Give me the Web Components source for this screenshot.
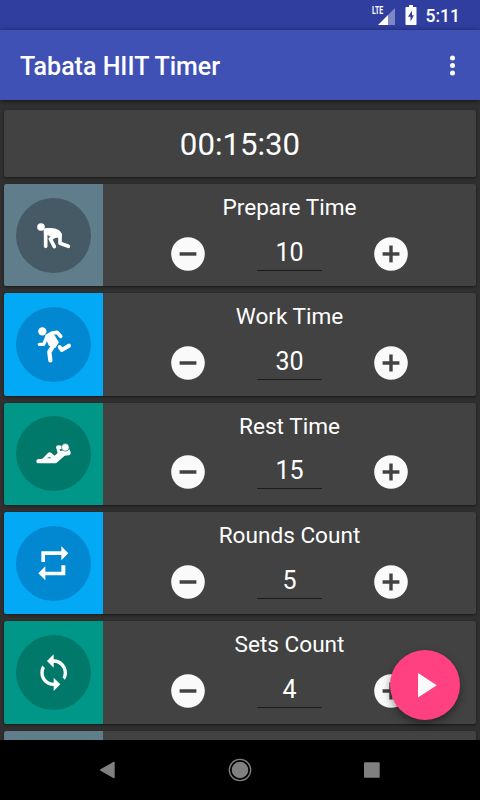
<!DOCTYPE html>
<html lang="en">
<head>
<meta charset="utf-8">
<title>Tabata HIIT Timer</title>
<style>
html, body {
    margin: 0;
    height: 100%;
    overflow: hidden;
    background: #303030;
    font-family: Roboto, "Liberation Sans", sans-serif;
    color: #fff;
}
</style>
</head>
<body>

<timer-app>
    <status-bar slot="top" time="5:11"></status-bar>
    <app-bar slot="top">Tabata HIIT Timer</app-bar>
    <total-card>00:15:30</total-card>
    <setting-card label="Prepare Time" value="10" icon="prepare" color="grey"></setting-card>
    <setting-card label="Work Time" value="30" icon="work" color="blue"></setting-card>
    <setting-card label="Rest Time" value="15" icon="rest" color="teal"></setting-card>
    <setting-card label="Rounds Count" value="5" icon="rounds" color="blue"></setting-card>
    <setting-card label="Sets Count" value="4" icon="sets" color="teal"></setting-card>
    <setting-card color="grey"></setting-card>
    <play-button slot="fab"></play-button>
    <nav-bar slot="bottom"></nav-bar>
</timer-app>

<script>
const define = (name, html, setup) => {
    const template = document.createElement('template');
    template.innerHTML = html;

    window.customElements.define(name, class extends HTMLElement {
        constructor() {
            super();
            const shadow = this.attachShadow({ mode: 'open' });
            shadow.append(template.content.cloneNode(true));
        }

        connectedCallback() {
            if (setup) setup(this, this.shadowRoot);
        }
    });
};

define('timer-app', `
<style>
:host {
    display: flex;
    flex-direction: column;
    width: 480px;
    height: 800px;
    position: relative;
    overflow: hidden;
}

main {
    flex: 1;
    min-height: 0;
    overflow: hidden;
    display: flex;
    flex-direction: column;
    gap: 7.2px;
    padding: 9.8px 3.8px 0;
    box-sizing: border-box;
    background: #303030;
}
</style>
<slot name="top"></slot>
<main><slot></slot></main>
<slot name="fab"></slot>
<slot name="bottom"></slot>
`);

define('status-bar', `
<style>
:host {
    display: flex;
    align-items: center;
    justify-content: flex-end;
    height: 30px;
    flex: none;
    background: #303f9f;
    padding-right: 20px;
    box-sizing: border-box;
}

.signal {
    display: flex;
    align-items: flex-start;
}

.lte {
    font-size: 10.5px;
    font-weight: 700;
    line-height: 10px;
    width: 12px;
    margin: 0 -6.5px 0 0;
    transform: scaleX(.66);
    transform-origin: 0 0;
}

.time {
    font-size: 17.5px;
    font-weight: 500;
    line-height: 30px;
    margin-left: 9px;
    padding-top: 2px;
}
</style>
<div class="signal">
    <span class="lte">LTE</span>
    <svg width="17" height="19" viewBox="0 0 17 19">
        <path d="M17 2v17H10V9z" fill="#7c87c4"/>
        <path d="M0 19L10 9v10z" fill="#fff"/>
    </svg>
</div>
<svg style="margin-left:10px" width="12" height="20" viewBox="0 0 12 20">
    <path d="M4 0h4v2h2.700q.8 0 .8.800V19.200q0 .8-.8.800H1.300q-.8 0-.8-.800V2.800Q.5 2 1.300 2H4z" fill="#fff"/>
    <path d="M7 5.500v4.700h2L5.500 16.500v-4.700H3z" fill="#303f9f"/>
</svg>
<span class="time"></span>
`, (host, root) => {
    root.querySelector('.time').textContent = host.getAttribute('time');
});

define('app-bar', `
<style>
:host {
    display: flex;
    align-items: center;
    justify-content: space-between;
    height: 70px;
    flex: none;
    box-sizing: border-box;
    padding: 0 25px 0 20px;
    background: #3f51b5;
    box-shadow: 0 1px 5px rgba(0, 0, 0, .6);
    font-size: 25px;
    font-weight: 500;
    z-index: 1;
}

span {
    padding-top: 3px;
}
</style>
<span><slot></slot></span>
<svg width="5" height="21" viewBox="0 0 5 21" fill="#fff">
    <circle cx="2.500" cy="3" r="2.500"/>
    <circle cx="2.500" cy="10.500" r="2.500"/>
    <circle cx="2.500" cy="18" r="2.500"/>
</svg>
`);

define('total-card', `
<style>
:host {
    display: flex;
    align-items: center;
    justify-content: center;
    flex: none;
    height: 67px;
    padding-top: 3px;
    box-sizing: border-box;
    border-radius: 2.500px;
    background: #424242;
    box-shadow: 0 1px 3px rgba(0, 0, 0, .5);
    font-size: 31.2px;
}
</style>
<slot></slot>
`);

// each icon is drawn inside the 225 unit square of its round badge
const icons = {
    prepare: `<svg viewBox="47 51 225 225" fill="none" stroke="#fff" stroke-linecap="round" stroke-linejoin="round">
        <circle cx="122" cy="138" r="11.500" fill="#fff" stroke="none"/>
        <path d="M130.500 149Q131 141 139 141H152Q179 143 184 158V170L165 170L150 167L142 162H131Z" fill="#fff" stroke="none"/>
        <path d="M136 148V196" stroke-width="11"/>
        <path d="M165 164L150 174L162 197" stroke-width="11"/>
        <path d="M179 160V187L204 196" stroke-width="11"/>
    </svg>`,
    work: `<svg viewBox="47 50 225 225" fill="none" stroke="#fff" stroke-linecap="round" stroke-linejoin="round">
        <circle cx="126" cy="123" r="12.500" fill="#fff" stroke="none"/>
        <path d="M117 162L130 162L138 143" stroke-width="10"/>
        <path d="M140 137L155 128L170 126L181 138" stroke-width="11"/>
        <path d="M137 139L157 130L173 156L163 171L147 164Z" fill="#fff" stroke-width="5"/>
        <path d="M158 167L147 185L150 210" stroke-width="13"/>
        <path d="M178 170L184 179L206 166" stroke-width="12"/>
    </svg>`,
    rest: `<svg viewBox="47 48 225 225" fill="#fff">
        <path fill-rule="evenodd" d="M112 178L126 176L143 159Q148 155 153 159L163 167L172 159L167 142Q168 136 174 136L188 138L205 143L211 157Q212 165 205 166L193 167L169 188Q167 190 162 190H112Q108 188 108 183Q109 179 112 178ZM139 175H154L147 171ZM177 148L180 153L189 151L186 147Z"/>
        <circle cx="195" cy="142" r="11.500" stroke="#00796b" stroke-width="2"/>
    </svg>`,
    rounds: `<svg viewBox="47 47 225 225" fill="#fff">
        <path d="M123 155V123H183V108L204 129L183 150V134H134V155ZM195 165V195H135V210L114 189L135 168V184H183V165Z"/>
    </svg>`,
    sets: `<svg viewBox="47 44 225 225" fill="#fff">
        <path transform="translate(100 97) scale(5)" d="M12 4V1L8 5l4 4V6c3.310 0 6 2.690 6 6 0 1.010-.25 1.970-.7 2.800l1.460 1.460C19.540 15.030 20 13.570 20 12c0-4.420-3.580-8-8-8zm0 14c-3.310 0-6-2.690-6-6 0-1.010.25-1.970.7-2.800L5.240 7.740C4.460 8.970 4 10.430 4 12c0 4.420 3.580 8 8 8v3l4-4-4-4v3z"/>
    </svg>`
};

const colors = {
    grey: ['#607d8b', '#455a64'],
    blue: ['#03a9f4', '#0288d1'],
    teal: ['#009688', '#00796b']
};

define('round-button', `
<style>
:host {
    display: block;
    width: 34px;
    height: 34px;
}

svg {
    display: block;
}
</style>
<svg width="34" height="34" viewBox="0 0 34 34">
    <circle cx="17" cy="17" r="16.800" fill="#fafafa"/>
    <path d="M8.600 17h16.800" stroke="#424242" stroke-width="3.400"/>
    <path class="bar" d="M17 8.600v16.800" stroke="#424242" stroke-width="3.400"/>
</svg>
`, (host, root) => {
    if (host.getAttribute('type') === 'minus') {
        root.querySelector('.bar').remove();
    }
});

define('setting-card', `
<style>
:host {
    display: flex;
    flex: none;
    height: 102.200px;
    border-radius: 2.500px;
    overflow: hidden;
    background: #424242;
    box-shadow: 0 1px 3px rgba(0, 0, 0, .5);
}

.side {
    width: 99px;
    display: flex;
    align-items: center;
    justify-content: center;
    background: var(--side);
}

.badge {
    width: 75px;
    height: 75px;
    border-radius: 50%;
    background: var(--badge);
}

.badge svg {
    display: block;
    width: 75px;
    height: 75px;
}

.body {
    flex: 1;
    display: flex;
    flex-direction: column;
    align-items: center;
}

.label {
    font-size: 22.600px;
    line-height: 26px;
    margin-top: 11px;
}

.row {
    display: flex;
    align-items: center;
    justify-content: center;
    width: 100%;
    height: 34px;
    margin-top: 15.700px;
}

.value {
    box-sizing: border-box;
    width: 65px;
    height: 34px;
    margin: 0 51.700px;
    text-align: center;
    font-size: 25px;
    line-height: 31px;
    border-bottom: 1px solid #1c1c1c;
}
</style>
<div class="side"><div class="badge"></div></div>
<div class="body">
    <div class="label"></div>
    <div class="row">
        <round-button type="minus"></round-button>
        <div class="value"></div>
        <round-button type="plus"></round-button>
    </div>
</div>
`, (host, root) => {
    const [side, badge] = colors[host.getAttribute('color')];
    host.style.setProperty('--side', side);
    host.style.setProperty('--badge', badge);
    root.querySelector('.badge').innerHTML = icons[host.getAttribute('icon')] || '';
    root.querySelector('.label').textContent = host.getAttribute('label');
    root.querySelector('.value').textContent = host.getAttribute('value');
});

define('play-button', `
<style>
:host {
    display: block;
    position: absolute;
    right: 20px;
    bottom: 80px;
    width: 70px;
    height: 70px;
    border-radius: 50%;
    background: #ff4081;
    box-shadow: 0 4px 8px rgba(0, 0, 0, .4);
}

svg {
    display: block;
}
</style>
<svg width="70" height="70" viewBox="0 0 70 70">
    <path d="M28 23v24.500L46.800 35.200z" fill="#fafafa"/>
</svg>
`);

define('nav-bar', `
<style>
:host {
    display: flex;
    align-items: center;
    justify-content: space-between;
    flex: none;
    height: 60px;
    box-sizing: border-box;
    padding: 0 96px;
    background: #000;
    z-index: 1;
}
</style>
<svg width="24" height="24" viewBox="0 0 24 24" fill="#808080">
    <path d="M4.500 11.300L17.700 3.800Q18.700 3.500 18.700 4.500V19.500Q18.700 20.500 17.700 20.200L4.500 12.700Q3.500 12 4.500 11.300z"/>
</svg>
<svg width="24" height="24" viewBox="0 0 24 24" fill="#808080">
    <circle cx="12" cy="12" r="10.700" fill="none" stroke="#808080" stroke-width="1.300"/>
    <circle cx="12" cy="12" r="8.300"/>
</svg>
<svg width="24" height="24" viewBox="0 0 24 24" fill="#808080">
    <rect x="4" y="4.300" width="15.700" height="15.500" rx="1"/>
</svg>
`);
</script>
</body>
</html>
